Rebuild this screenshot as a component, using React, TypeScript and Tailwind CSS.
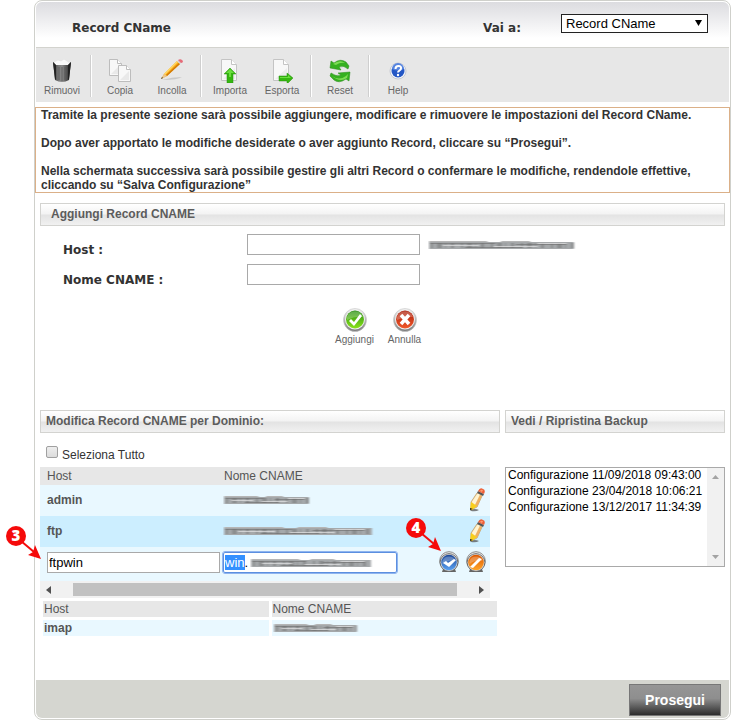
import { useEffect, useRef, type ReactNode } from 'react';

const BACKUPS = [
  'Configurazione 11/09/2018 09:43:00',
  'Configurazione 23/04/2018 10:06:21',
  'Configurazione 13/12/2017 11:34:39',
];

const SECTIONS = ['Record CName', 'Record A', 'Record MX', 'Record TXT'];

function TrashIcon() {
  return (
    <svg width="24" height="24" viewBox="0 0 24 24">
      <defs>
        <linearGradient id="bin">
          <stop offset="0" stopColor="#333" />
          <stop offset=".3" stopColor="#777" />
          <stop offset=".5" stopColor="#8c8c8c" />
          <stop offset=".8" stopColor="#4a4a4a" />
          <stop offset="1" stopColor="#222" />
        </linearGradient>
      </defs>
      <path d="M4 3l4-2 3 1 3-2 3 2 3 2-2 5H6z" fill="#fafafa" stroke="#ddd" strokeWidth=".5" />
      <path d="M3 3l3 3h12l3-3-2 18q-7 4-14 0z" fill="url(#bin)" />
      <path d="M9 8v13M12 8v14M15 8v13" stroke="#555" strokeWidth=".8" />
      <path d="M3 3l3 3v15l-1-1zM21 3l-3 3v15l1-1z" fill="#222" />
    </svg>
  );
}

function Page({ x = 0, y = 0 }: { x?: number; y?: number }) {
  return (
    <g transform={`translate(${x} ${y})`}>
      <path d="M.5.5h8l4 4v12H.5z" fill="#f8f8f8" stroke="#bdbdbd" />
      <path d="M8.500.500v4h4" fill="#fff" stroke="#bdbdbd" />
      <path d="M2 15L11 6v9z" fill="#e9e9e9" />
    </g>
  );
}

function CopyIcon() {
  return (
    <svg width="24" height="24" viewBox="0 0 24 24">
      <Page x={1} y={0} />
      <Page x={10} y={6} />
    </svg>
  );
}

function PasteIcon() {
  return (
    <svg width="24" height="24" viewBox="0 0 24 24">
      <path d="M2 21q10-3 20-3-4 3-20 3z" fill="#bbb" opacity=".7" />
      <path d="M1 20l3-5L17 2l3 3L7 17z" fill="#f9a916" />
      <path d="M4 15L17 2l1 1L5 16z" fill="#ffd863" />
      <path d="M7 17L20 5l-1-1L6 16z" fill="#d27a08" />
      <path d="M1 20l3-5 3 2z" fill="#e9c690" />
      <path d="M1 20l1-2 1 1z" fill="#333" />
      <path d="M17 2l2-1 3 2-2 2z" fill="#d3d3d3" />
      <path d="M18 1q3-2 5 1 0 2-2 2z" fill="#e66b78" />
    </svg>
  );
}

function LargePage() {
  return (
    <>
      <path d="M3.500.500h10l5 5v16h-15z" fill="#f8f8f8" stroke="#c4c4c4" />
      <path d="M13.500.500v5h5" fill="#fff" stroke="#c4c4c4" />
      <path d="M5 20L17 9v11z" fill="#ededed" />
    </>
  );
}

function ImportIcon() {
  return (
    <svg width="24" height="24" viewBox="0 0 24 24">
      <LargePage />
      <path d="M12 9l6 6h-3v9H9v-9H6z" fill="#35b710" stroke="#2b8f10" strokeWidth=".5" />
      <path d="M12 10l4 4h-3v4h-2v-4H8z" fill="#6ade3e" />
    </svg>
  );
}

function ExportIcon() {
  return (
    <svg width="24" height="24" viewBox="0 0 24 24">
      <LargePage />
      <path d="M23 19l-6-5v3H9v5h8v3z" fill="#35b710" stroke="#2b8f10" strokeWidth=".5" />
      <path d="M10 18h8v-2l3 3H10z" fill="#6ade3e" />
    </svg>
  );
}

function ResetIcon() {
  return (
    <svg width="24" height="24" viewBox="0 0 24 24">
      <path d="M2 9L3 2l3 2q6-5 12-1l3 4-1 3q-4-4-9-2l2 3z" fill="#35b020" stroke="#258717" strokeWidth=".5" />
      <path d="M5 5q7-5 12-1-5-1-9 2z" fill="#7ddc54" />
      <path d="M22 13l-1 9-3-2q-7 5-12 1l-4-4 1-3q5 4 10 2l-3-2z" fill="#35b020" stroke="#258717" strokeWidth=".5" />
      <path d="M4 17q7 5 14 0l2-2-1 4q-7 5-15-2z" fill="#7ddc54" />
    </svg>
  );
}

function HelpIcon() {
  return (
    <svg width="24" height="24" viewBox="0 0 24 24">
      <circle cx="12" cy="12" r="8" fill="#f4f6fa" stroke="#c5c9d2" />
      <circle cx="12" cy="12" r="6.500" fill="#2457c5" />
      <path d="M6 10a6 6 0 0 1 12 0q-6 3-12 0z" fill="#5684df" />
      <path d="M9.500 10q0-3 3-3t2.500 2.500q0 1-1.500 2t-1.500 2" fill="none" stroke="#fff" strokeWidth="2" />
      <circle cx="12" cy="16" r="1.200" fill="#fff" />
    </svg>
  );
}

function Badge({ tone, children }: { tone: 'green' | 'red'; children: ReactNode }) {
  const [light, dark] = tone === 'green' ? ['#8be31a', '#258b12'] : ['#f1592b', '#a91d0a'];
  return (
    <svg width="24" height="24" viewBox="0 0 24 24">
      <defs>
        <linearGradient id={`rim-${tone}`} x2="0" y2="1">
          <stop offset="0" stopColor="#f4f4f4" />
          <stop offset="1" stopColor="#777" />
        </linearGradient>
        <linearGradient id={`fill-${tone}`} x2="0" y2="1">
          <stop offset="0" stopColor={dark} />
          <stop offset="1" stopColor={light} />
        </linearGradient>
      </defs>
      <circle cx="12" cy="12" r="11.500" fill={`url(#rim-${tone})`} stroke="#c3c3c3" strokeWidth=".6" />
      <circle cx="12" cy="11.500" r="10" fill="#eee" />
      <circle cx="12" cy="11.500" r="9" fill={`url(#fill-${tone})`} />
      <path d="M4 9a8.500 8.500 0 0 1 16 0q-8-1-16 3z" fill="#fff" opacity=".25" />
      {children}
    </svg>
  );
}

function RoundIcon({ tone, children }: { tone: 'blue' | 'orange'; children: ReactNode }) {
  const [light, dark] = tone === 'blue' ? ['#5aa0f0', '#1d4796'] : ['#ffa528', '#dc5600'];
  return (
    <svg width="20" height="22" viewBox="0 0 20 22">
      <defs>
        <linearGradient id={`disc-${tone}`} x2="0" y2="1">
          <stop offset="0" stopColor={dark} />
          <stop offset="1" stopColor={light} />
        </linearGradient>
      </defs>
      <path d="M4 18h12l1 3H3z" fill="#666" />
      <circle cx="10" cy="10" r="9.300" fill="#f1f1f1" stroke="#888" />
      <circle cx="10" cy="11.500" r="8.900" fill="#ddd" stroke="#555" strokeWidth=".8" />
      <circle cx="10" cy="11.500" r="7.800" fill={`url(#disc-${tone})`} />
      <path d="M3.500 10a7 7 0 0 1 13 0q-7-2-13 3z" fill="#fff" opacity=".25" />
      {children}
    </svg>
  );
}

function EditIcon() {
  return (
    <svg width="18" height="24" viewBox="0 0 18 24">
      <path d="M2 22q5-2 9 0-3 2-8 1z" fill="#555" opacity=".75" />
      <path d="M3 14L9 5l5 3-5 11-6 3z" fill="#f9dca0" stroke="#a98550" strokeWidth=".6" />
      <path d="M4 14L10 5l2 1-5 11z" fill="#fff4d2" />
      <path d="M7 17l5-10 2 1-5 11z" fill="#efb062" />
      <path d="M3 14l6 4-5 4H2z" fill="#f8cf1c" />
      <path d="M2 20l3 1-3 1z" fill="#222" />
      <path d="M9 5l1-2 6 3-1 2z" fill="#555" />
      <path d="M10 3q2-4 5-2 3 1 1 5z" fill="#ee6038" />
      <path d="M12 3q1-2 3-1l-1 2z" fill="#ff9a70" />
    </svg>
  );
}

function Callout({ number, className }: { number: number; className: string }) {
  return (
    <svg className={`pointer-events-none absolute ${className}`} width="38" height="35" viewBox="0 0 38 35">
      <path d="M16 15l13 11" stroke="#f50a0a" strokeWidth="2" />
      <path d="M36 33l-13-4 5-3 2-7z" fill="#f50a0a" />
      <circle cx="11" cy="10" r="10" fill="#f50a0a" />
      <text x="11" y="15" textAnchor="middle" fontFamily="Open Sans, sans-serif" fontWeight="800" fontSize="15" fill="#fff">
        {number}
      </text>
    </svg>
  );
}

/* Value smeared over with grey strokes */
function Hidden({ width, className = '' }: { width: number; className?: string }) {
  const w = width - 4;
  return (
    <svg className={className} width={width} height="10" viewBox={`0 0 ${width} 10`}>
      <defs>
        <filter id="smear" x="-5%" y="-20%" width="110%" height="140%">
          <feGaussianBlur stdDeviation="1.2 0.4" />
        </filter>
      </defs>
      <g filter="url(#smear)" fill="none">
        <path d={`M1 1.500h${w * 0.4}M${w * 0.5} 1.500h${w * 0.2}`} stroke="#b5b5b5" />
        <path d={`M1 5.500H${w}`} stroke="#a5a8aa" strokeWidth="7" />
        <path d={`M3 5.500H${w}`} stroke="#666" strokeWidth="5" strokeDasharray="2 4 5 3 1 5 3 7" opacity=".4" />
        <path d={`M2 3.500h${w * 0.45}M${w * 0.6} 4.500h${w * 0.35}M${w * 0.25} 7.500h${w * 0.4}`} stroke="#6a6a6a" opacity=".6" />
        <path d={`M${w * 0.1} 5.500h${w * 0.25}M${w * 0.45} 6.500h${w * 0.3}M${w * 0.75} 3.500h${w * 0.2}`} stroke="#e5e5e5" opacity=".7" />
      </g>
    </svg>
  );
}

function Tool({ label, children }: { label: string; children: ReactNode }) {
  return (
    <button className="flex w-[52px] flex-col items-center text-[10px] leading-4 text-[#666]">
      {children}
      {label}
    </button>
  );
}

function Separator() {
  return <div className="mx-0.5 -mt-1 h-[42px] w-0.5 border-l border-[#cfcfcf] bg-white" />;
}

function SectionTitle({ className = 'pl-[5px]', children }: { className?: string; children: ReactNode }) {
  return (
    <h2
      className={`h-[23px] border border-[#d3d3d0] bg-[linear-gradient(#fff,#f3f3f3_48%,#e3e3e3_52%,#f1f1f1)] text-xs leading-5 font-bold text-[#5c5c5c] ${className}`}
    >
      {children}
    </h2>
  );
}

export default function App() {
  const targetRef = useRef<HTMLInputElement>(null);

  useEffect(() => {
    targetRef.current?.focus({ preventScroll: true });
    targetRef.current?.setSelectionRange(0, 3);
  }, []);

  return (
    <main className="bg-white pl-[34px] font-['Liberation_Sans',Arial,sans-serif] text-xs text-[#333]">
      <div className="rounded-lg border border-[#cfd0cb] p-px">
        <header className="flex h-[46px] items-start justify-between rounded-t-md border-b border-[#d3d3ce] bg-linear-to-b from-[#dcdce0] to-white to-80% pt-3 pr-[21px] pl-9 font-['DejaVu_Sans',Verdana,sans-serif] font-bold">
          <h1 className="leading-7">Record CName</h1>
          <div className="flex gap-10">
            <label htmlFor="goto" className="leading-7">Vai a:</label>
            <div className="relative">
              <select
                id="goto"
                className="block h-[19px] w-[147px] appearance-none border border-[#222] bg-white pl-1 font-['Liberation_Sans',Arial,sans-serif] text-[13px] leading-4 font-normal text-black"
              >
                {SECTIONS.map((s) => (
                  <option key={s}>{s}</option>
                ))}
              </select>
              <svg className="pointer-events-none absolute top-1.5 right-1.5" width="7" height="6" viewBox="0 0 7 6">
                <path d="M0 0h7L3.500 6z" fill="#000" />
              </svg>
            </div>
          </div>
        </header>

        <nav className="flex h-[54px] items-start bg-[#e7e7e7] pt-[11px]">
          <Tool label="Rimuovi"><TrashIcon /></Tool>
          <Separator />
          <Tool label="Copia"><CopyIcon /></Tool>
          <Tool label="Incolla"><PasteIcon /></Tool>
          <Separator />
          <Tool label="Importa"><ImportIcon /></Tool>
          <Tool label="Esporta"><ExportIcon /></Tool>
          <Separator />
          <Tool label="Reset"><ResetIcon /></Tool>
          <Separator />
          <Tool label="Help"><HelpIcon /></Tool>
        </nav>

        <div className="-mx-px mt-[5px] border border-[#dbb088] pr-8 pl-[5px] leading-[14px] font-bold">
          <p>Tramite la presente sezione sarà possibile aggiungere, modificare e rimuovere le impostazioni del Record CName.</p>
          <p className="mt-3.5">Dopo aver apportato le modifiche desiderate o aver aggiunto Record, cliccare su “Prosegui”.</p>
          <p className="mt-3.5">
            Nella schermata successiva sarà possibile gestire gli altri Record o confermare le modifiche, rendendole effettive,
            cliccando su “Salva Configurazione”
          </p>
        </div>

        <div className="px-1 pt-2.5 pb-[41px]">
          {/* New record */}
          <SectionTitle className="pl-2.5">Aggiungi Record CNAME</SectionTitle>
          <form className="pt-2 pl-[23px]" onSubmit={(e) => e.preventDefault()}>
            <div className="flex h-[30px] items-start">
              <label htmlFor="host" className="w-[184px] font-['DejaVu_Sans',Verdana,sans-serif] leading-8 font-bold">Host :</label>
              <input id="host" className="h-[21px] w-[173px] border border-[#a9a9a9] bg-white px-px text-[13px] text-black" />
              <span className="ml-2 flex h-[21px] items-center text-black">
                <Hidden width={150} />
              </span>
            </div>
            <div className="flex h-[30px] items-start">
              <label htmlFor="cname" className="w-[184px] font-['DejaVu_Sans',Verdana,sans-serif] leading-8 font-bold">Nome CNAME :</label>
              <input id="cname" className="h-[21px] w-[173px] border border-[#a9a9a9] bg-white px-px text-[13px] text-black" />
            </div>
          </form>
          <div className="mt-3.5 flex justify-center pr-1.5 text-[10px] leading-4 text-[#666]">
            <button className="flex w-[50px] flex-col items-center">
              <Badge tone="green">
                <path d="M6 13l2-2 3 3 6-8 2 2-8 10z" fill="#fff" />
              </Badge>
              Aggiungi
            </button>
            <button className="flex w-[50px] flex-col items-center">
              <Badge tone="red">
                <path d="M8 7l8 9M16 7l-8 9" stroke="#fff" strokeWidth="3.500" />
              </Badge>
              Annulla
            </button>
          </div>

          <div className="mt-[62px] flex gap-[5px]">
            {/* Existing records */}
            <section className="min-w-0 flex-1">
              <SectionTitle>Modifica Record CNAME per Dominio:</SectionTitle>
              <div className="flex h-[34px] items-start gap-1 pt-[13px] pl-1.5">
                <input
                  id="all"
                  type="checkbox"
                  className="size-3 appearance-none rounded-xs border border-[#a0a0a0] bg-linear-to-b from-[#eee] to-[#dcdcdc]"
                />
                <label htmlFor="all" className="leading-[18px]">Seleziona Tutto</label>
              </div>

              <div className="mr-2.5">
                <table className="w-full table-fixed text-left text-[#555]">
                  <colgroup>
                    <col className="w-[180px]" />
                    <col />
                    <col className="w-20" />
                  </colgroup>
                  <thead>
                    <tr className="h-[18px] bg-[#e7e7e7]">
                      <th className="p-0 pl-[7px] font-normal">Host</th>
                      <th className="p-0 pl-1 font-normal">Nome CNAME</th>
                      <td className="p-0" />
                    </tr>
                  </thead>
                  <tbody>
                    <tr className="h-[31px] bg-[#e9f8ff]">
                      <td className="p-0 pb-0.5 pl-[7px] font-bold">admin</td>
                      <td className="p-0 pb-0.5 pl-[3px]"><Hidden width={90} /></td>
                      <td className="p-0 pr-1 pb-0.5">
                        <button className="ml-auto block" aria-label="Modifica admin"><EditIcon /></button>
                      </td>
                    </tr>
                    <tr className="h-[31px] bg-[#cceeff]">
                      <td className="p-0 pb-0.5 pl-[7px] font-bold">ftp</td>
                      <td className="p-0 pb-0.5 pl-[3px]"><Hidden width={153} /></td>
                      <td className="p-0 pr-1 pb-0.5">
                        <button className="ml-auto block" aria-label="Modifica ftp"><EditIcon /></button>
                      </td>
                    </tr>
                    <tr className="h-[34px] bg-[#e9f8ff] align-top">
                      <td className="p-0 pt-[5px] pl-[7px]">
                        <div className="relative">
                          <input
                            aria-label="Host"
                            defaultValue="ftpwin"
                            className="block h-[21px] w-[173px] border border-[#a9a9a9] bg-white px-px text-[13px] text-black"
                          />
                          <Callout number={3} className="-top-[26px] -left-[42px]" />
                        </div>
                      </td>
                      <td className="p-0 pt-[5px] pl-[3px]">
                        <div className="relative w-[174px]">
                          <input
                            ref={targetRef}
                            aria-label="Nome CNAME"
                            defaultValue="win."
                            className="block h-[21px] w-full rounded-xs border border-[#5b8fe0] bg-white px-px text-[13px] text-black outline-1 outline-[#8fb4ef] selection:bg-[#3390ff] selection:text-white"
                          />
                          <Hidden width={125} className="pointer-events-none absolute top-1.5 left-[27px]" />
                        </div>
                      </td>
                      <td className="p-0 pt-1 pr-1">
                        <div className="relative ml-auto flex w-[47px] justify-between">
                          <button aria-label="Conferma">
                            <RoundIcon tone="blue">
                              <path d="M4 12l3-2 2 2 6-4 2 1-7 7z" fill="#fff" />
                            </RoundIcon>
                          </button>
                          <button aria-label="Annulla modifica">
                            <RoundIcon tone="orange">
                              <path d="M4 16l9-9 3 1-9 9z" fill="#fff" />
                            </RoundIcon>
                          </button>
                          <Callout number={4} className="-top-[33px] -left-[34px]" />
                        </div>
                      </td>
                    </tr>
                  </tbody>
                </table>
                <div className="flex h-[17px] items-center bg-[#f1f1f1] px-1.5">
                  <svg width="5" height="8" viewBox="0 0 5 8"><path d="M5 0v8L0 4z" fill="#505050" /></svg>
                  <div className="mx-[22px] h-[13px] flex-1 bg-[#c1c1c1]" />
                  <svg width="5" height="8" viewBox="0 0 5 8"><path d="M0 0v8l5-4z" fill="#505050" /></svg>
                </div>
              </div>

              <table className="w-full table-fixed border-separate border-spacing-[3px] text-left text-[#555]">
                <thead>
                  <tr className="h-4 leading-4">
                    <th className="bg-[#e7e7e7] p-0 pl-px font-normal">Host</th>
                    <th className="bg-[#e7e7e7] p-0 pl-px font-normal">Nome CNAME</th>
                  </tr>
                </thead>
                <tbody>
                  <tr className="h-4 leading-4">
                    <td className="bg-[#e9f8ff] p-0 pl-px font-bold">imap</td>
                    <td className="bg-[#e9f8ff] p-0 pl-px"><Hidden width={88} /></td>
                  </tr>
                </tbody>
              </table>
            </section>

            {/* Backups */}
            <section className="w-[220px]">
              <SectionTitle>Vedi / Ripristina Backup</SectionTitle>
              <div className="mt-[34px] flex h-[100px] border border-[#a9a9a9] bg-white">
                <select size={6} aria-label="Backup" className="min-w-0 flex-1 overflow-hidden text-black outline-none">
                  {BACKUPS.map((b) => (
                    <option key={b} className="h-4 min-h-0 p-0 pl-0.5 leading-4">{b}</option>
                  ))}
                </select>
                <div className="flex w-[17px] flex-col items-center justify-between bg-[#f1f1f1] py-[7px]">
                  <svg width="7" height="4" viewBox="0 0 7 4"><path d="M0 4h7L3.500 0z" fill="#a3a3a3" /></svg>
                  <svg width="7" height="4" viewBox="0 0 7 4"><path d="M0 0h7L3.500 4z" fill="#a3a3a3" /></svg>
                </div>
              </div>
            </section>
          </div>
        </div>

        <footer className="flex h-[38px] justify-end rounded-b-md bg-[#d5d6d0] pt-1 pr-2">
          <button className="h-8 w-[92px] border border-[#777] bg-[linear-gradient(#969696,#8e8e8e_45%,#2c2c2c)] text-sm font-bold text-white">
            Prosegui
          </button>
        </footer>
      </div>
    </main>
  );
}
